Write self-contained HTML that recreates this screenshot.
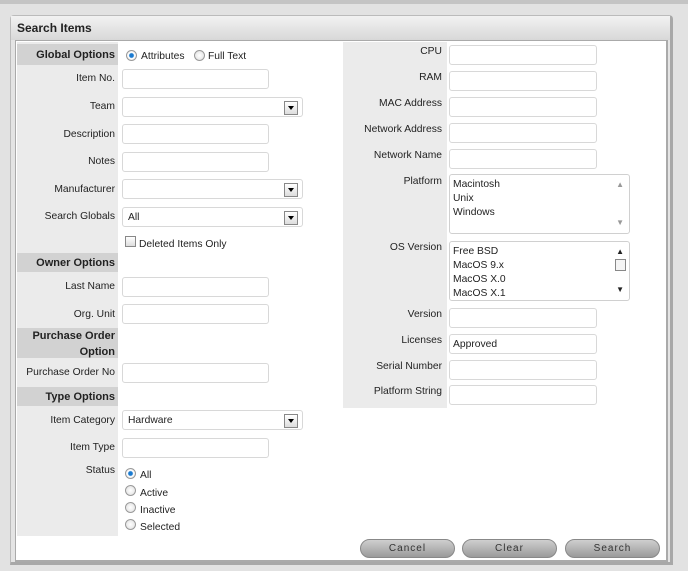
<!DOCTYPE html><html><head><style>
body{margin:0;width:688px;height:571px;background:#e2e2e2;position:relative;overflow:hidden;font-family:"Liberation Sans",Arial,sans-serif;font-size:10.3px;color:#222}
div,span{position:absolute;box-sizing:border-box}
.l{text-align:right;white-space:nowrap}
.h{background:#d2d2d2;font-weight:bold;font-size:11px;text-align:right;padding-right:3px;left:17px;width:101px;line-height:16px}
.i{height:20px;border:1px solid #d8d8d8;border-radius:3px;background:#fff;width:147px}
.s{height:20px;border:1px solid #d8d8d8;border-radius:3px;background:#fff;width:181px;padding:3px 5px;line-height:14px}
.s::after{content:"";position:absolute;right:4px;top:3px;width:12px;height:12px;border:1px solid #888;background:linear-gradient(#fff,#ddd)}
.s::before{content:"";position:absolute;right:8px;top:8px;border:3px solid transparent;border-top:4px solid #000;z-index:2}
.r{width:11px;height:11px;border-radius:50%;border:1px solid #999;background:radial-gradient(#fff,#ddd)}
.r.on{background:radial-gradient(#1a7ad0 30%,#fff 45%,#ddd)}
.b{height:19px;width:95px;border-radius:10px;background:linear-gradient(#cfcfcf,#9a9a9a);border:1px solid #888;text-align:center;line-height:17px;color:#333;letter-spacing:1px;font-size:10px;top:539px}
.t{white-space:nowrap}
</style></head><body>
<div style="left:0;top:0;width:688px;height:4px;background:#c4c4c4"></div>
<div style="left:10px;top:15px;width:663px;height:550px;background:#e4e4e4;border:1px solid #bbb;border-right:3px solid #a8a8a8;border-bottom:3px solid #a8a8a8;border-radius:4px 4px 0 0"></div>
<div style="left:11px;top:16px;width:659px;height:24px;background:linear-gradient(#f2f2f2,#d8d8d8);font-weight:bold;font-size:12px;padding:5px 6px">Search Items</div>
<div style="left:15px;top:40px;width:653px;height:522px;background:#fff;border:1px solid #aaa;border-right:2px solid #aaa;border-bottom:2px solid #aaa"></div>
<div style="left:17px;top:42px;width:101px;height:494px;background:#ebebeb"></div>
<div style="left:343px;top:42px;width:104px;height:366px;background:#ebebeb"></div>

<div class="h" style="top:44px;height:21px;padding-top:3px">Global Options</div>
<div class="h" style="top:253px;height:19px;padding-top:2px">Owner Options</div>
<div class="h" style="top:328px;height:30px;padding-top:0">Purchase Order<br>Option</div>
<div class="h" style="top:387px;height:19px;padding-top:2px">Type Options</div>

<div class="r on" style="left:126px;top:50px"></div><span class="t" style="left:141px;top:51px">Attributes</span>
<div class="r" style="left:194px;top:50px"></div><span class="t" style="left:208px;top:51px">Full Text</span>

<span class="l" style="right:573px;top:73px">Item No.</span><div class="i" style="left:122px;top:69px"></div>
<span class="l" style="right:573px;top:101px">Team</span><div class="s" style="left:122px;top:97px"></div>
<span class="l" style="right:573px;top:129px">Description</span><div class="i" style="left:122px;top:124px"></div>
<span class="l" style="right:573px;top:156px">Notes</span><div class="i" style="left:122px;top:152px"></div>
<span class="l" style="right:573px;top:184px">Manufacturer</span><div class="s" style="left:122px;top:179px"></div>
<span class="l" style="right:573px;top:211px">Search Globals</span><div class="s" style="left:122px;top:207px">All</div>
<div style="left:125px;top:236px;width:11px;height:11px;border:1px solid #888;background:linear-gradient(#fff,#ddd)"></div><span class="t" style="left:139px;top:239px">Deleted Items Only</span>
<span class="l" style="right:573px;top:281px">Last Name</span><div class="i" style="left:122px;top:277px"></div>
<span class="l" style="right:573px;top:309px">Org. Unit</span><div class="i" style="left:122px;top:304px"></div>
<span class="l" style="right:573px;top:367px">Purchase Order No</span><div class="i" style="left:122px;top:363px"></div>
<span class="l" style="right:573px;top:415px">Item Category</span><div class="s" style="left:122px;top:410px">Hardware</div>
<span class="l" style="right:573px;top:442px">Item Type</span><div class="i" style="left:122px;top:438px"></div>
<span class="l" style="right:573px;top:465px">Status</span>
<div class="r on" style="left:125px;top:468px"></div><span class="t" style="left:140px;top:470px">All</span>
<div class="r" style="left:125px;top:485px"></div><span class="t" style="left:140px;top:488px">Active</span>
<div class="r" style="left:125px;top:502px"></div><span class="t" style="left:140px;top:505px">Inactive</span>
<div class="r" style="left:125px;top:519px"></div><span class="t" style="left:140px;top:522px">Selected</span>

<span class="l" style="right:246px;top:46px">CPU</span><div class="i" style="left:449px;top:45px;width:148px"></div>
<span class="l" style="right:246px;top:72px">RAM</span><div class="i" style="left:449px;top:71px;width:148px"></div>
<span class="l" style="right:246px;top:98px">MAC Address</span><div class="i" style="left:449px;top:97px;width:148px"></div>
<span class="l" style="right:246px;top:124px">Network Address</span><div class="i" style="left:449px;top:123px;width:148px"></div>
<span class="l" style="right:246px;top:150px">Network Name</span><div class="i" style="left:449px;top:149px;width:148px"></div>
<span class="l" style="right:246px;top:176px">Platform</span>
<div style="left:449px;top:174px;width:181px;height:60px;border:1px solid #d0d0d0;border-radius:3px;padding:3px;line-height:14px">Macintosh<br>Unix<br>Windows<span style="right:5px;top:3px;color:#999;font-size:8px">▲</span><span style="right:5px;bottom:3px;color:#999;font-size:8px">▼</span></div>
<span class="l" style="right:246px;top:242px">OS Version</span>
<div style="left:449px;top:241px;width:181px;height:60px;border:1px solid #d0d0d0;border-radius:3px;padding:3px;line-height:14px">Free BSD<br>MacOS 9.x<br>MacOS X.0<br>MacOS X.1<span style="right:5px;top:3px;font-size:8px">▲</span><span style="right:3px;top:17px;width:11px;height:12px;border:1px solid #888;background:#f4f4f4"></span><span style="right:5px;bottom:3px;font-size:8px">▼</span></div>
<span class="l" style="right:246px;top:309px">Version</span><div class="i" style="left:449px;top:308px;width:148px"></div>
<span class="l" style="right:246px;top:335px">Licenses</span><div class="i" style="left:449px;top:334px;width:148px;padding:4px 3px">Approved</div>
<span class="l" style="right:246px;top:361px">Serial Number</span><div class="i" style="left:449px;top:360px;width:148px"></div>
<span class="l" style="right:246px;top:386px">Platform String</span><div class="i" style="left:449px;top:385px;width:148px"></div>

<div class="b" style="left:360px">Cancel</div>
<div class="b" style="left:462px">Clear</div>
<div class="b" style="left:565px">Search</div>
</body></html>
